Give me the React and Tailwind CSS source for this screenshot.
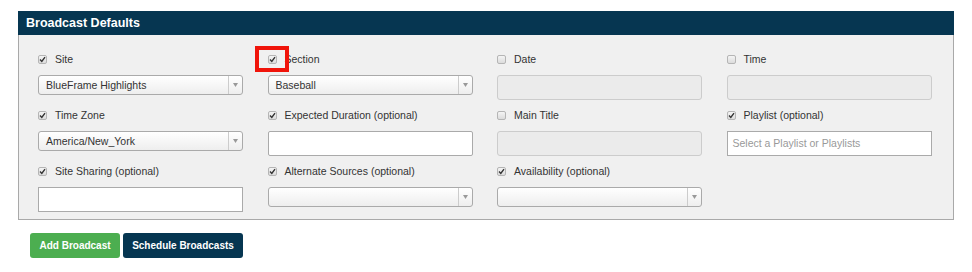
const font = { fontFamily: '"Liberation Sans", Arial, sans-serif' };

function Check({ checked }) {
  return (
    <span className="w-[9px] h-[9px] shrink-0 rounded-[2px] border border-[#b5b5b5] bg-gradient-to-b from-[#f4f4f4] to-[#dcdcdc] flex items-center justify-center">
      {checked && (
        <svg width="7" height="7" viewBox="0 0 7 7">
          <path d="M1 3.6 L2.8 5.4 L6 1.2" fill="none" stroke="#333" strokeWidth="1.4" />
        </svg>
      )}
    </span>
  );
}

function Label({ checked, text, highlight }) {
  return (
    <div className="relative h-4 flex items-center gap-[8px] text-[10.5px] text-[#333]">
      <Check checked={checked} />
      <span className="pt-[2px]">{text}</span>
      {highlight && (
        <span className="absolute left-[-13px] top-[-5px] w-[34px] h-[26px] border-[4px] border-[#f0140a]" />
      )}
    </div>
  );
}

function Select({ value }) {
  return (
    <div className="h-[20px] flex rounded-[3px] border border-[#aaa] bg-gradient-to-b from-white to-[#eee] text-[10.5px] text-[#333]">
      <div className="flex-1 flex items-center pl-[7px] pt-[2px]">{value}</div>
      <div className="w-[14px] border-l border-[#ccc] flex items-center justify-center">
        <svg width="5" height="4" viewBox="0 0 5 4">
          <path d="M0 0 L5 0 L2.5 4 Z" fill="#999" />
        </svg>
      </div>
    </div>
  );
}

function TextInput({ disabled, placeholder, square }) {
  return (
    <div
      className={`h-[25px] border flex items-center pl-[5px] text-[10.5px] text-[#999] ${
        disabled
          ? 'bg-[#ebebeb] border-[#ccc] rounded-[3px]'
          : square
          ? 'bg-white border-[#aaa]'
          : 'bg-white border-[#aaa] rounded-[2px]'
      }`}
    >
      {placeholder}
    </div>
  );
}

const cells = [
  { label: 'Site', checked: true, field: <Select value="BlueFrame Highlights" /> },
  { label: 'Section', checked: true, highlight: true, field: <Select value="Baseball" /> },
  { label: 'Date', checked: false, field: <TextInput disabled /> },
  { label: 'Time', checked: false, field: <TextInput disabled /> },
  { label: 'Time Zone', checked: true, field: <Select value="America/New_York" /> },
  { label: 'Expected Duration (optional)', checked: true, field: <TextInput /> },
  { label: 'Main Title', checked: false, field: <TextInput disabled /> },
  { label: 'Playlist (optional)', checked: true, field: <TextInput square placeholder="Select a Playlist or Playlists" /> },
  { label: 'Site Sharing (optional)', checked: true, field: <TextInput square /> },
  { label: 'Alternate Sources (optional)', checked: true, field: <Select value="" /> },
  { label: 'Availability (optional)', checked: true, field: <Select value="" /> },
];

export default function App() {
  return (
    <div className="w-[972px] h-[272px] bg-white pt-[11px] pl-[18px]" style={font}>
      <div className="w-[936px]">
        <div className="h-[24px] bg-[#063651] flex items-center pl-[8px] text-[12.5px] font-bold text-white">
          Broadcast Defaults
        </div>
        <div className="bg-[#f0f0f0] border border-t-0 border-[#a9a9a9] pl-[19px] pt-[16px] pb-[7px]">
          <div className="grid grid-cols-[205px_205px_205px_205px] gap-x-[24.5px] gap-y-[7px]">
            {cells.map((c) => (
              <div key={c.label} className="flex flex-col gap-[8px] h-[49px]">
                <Label checked={c.checked} text={c.label} highlight={c.highlight} />
                {c.field}
              </div>
            ))}
          </div>
        </div>
      </div>
      <div className="flex gap-[3px] mt-[13px] ml-[12px]">
        <button className="h-[25px] w-[90px] rounded-[3px] bg-[#4cae50] text-white text-[10px] font-bold">
          Add Broadcast
        </button>
        <button className="h-[25px] w-[120px] rounded-[3px] bg-[#063651] text-white text-[10px] font-bold">
          Schedule Broadcasts
        </button>
      </div>
    </div>
  );
}
